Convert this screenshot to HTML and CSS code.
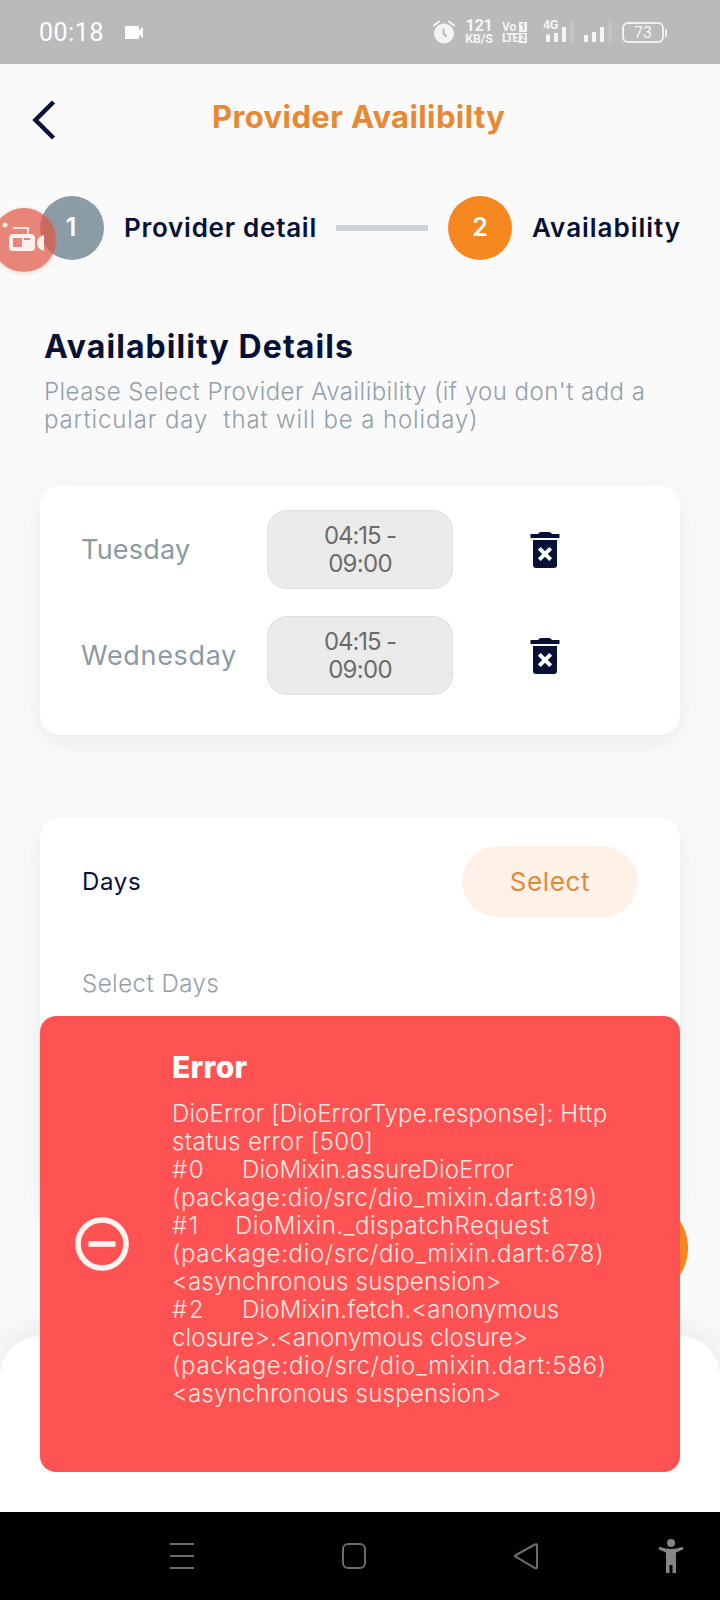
FILE: index.html
```
<!DOCTYPE html>
<html lang="en">
<head>
<meta charset="utf-8">
<title>Provider Availability</title>
<link rel="stylesheet" href="styles.css">
</head>
<body>
<div class="screen">
  <header class="status">
    <div class="status-left">
      <span class="clock">00:18</span>
      <svg class="cam" width="19" height="13" viewBox="0 0 19 13"><path d="M1 0h12q1 0 1 1v3.500L18 1v11l-4-3.500V12q0 1-1 1H1q-1 0-1-1V1q0-1 1-1z" fill="#fff"/></svg>
    </div>
    <div class="status-right">
      <svg class="alarm" width="22" height="24" viewBox="0 0 22 24"><circle cx="11" cy="13.500" r="10" fill="#f4f4f4"/><path d="M1 5.500L6 1.500M21 5.500L16 1.500" stroke="#f4f4f4" stroke-width="2" stroke-linecap="round"/><path d="M10.500 9.500v4l2.500 2.500" stroke="#bababa" stroke-width="2" fill="none" stroke-linecap="round"/></svg>
      <div class="speed"><span class="sp1">121</span><span class="sp2">KB/S</span></div>
      <div class="volte"><div><span>Vo</span><b>1</b></div><div><span class="lte">LTE</span><b>2</b></div></div>
      <div class="sig"><span class="g4">4G</span><svg width="30" height="20" viewBox="0 0 30 20"><path d="M1 14a2 2 0 0 1 4 0v6H1zM9 11h4v9H9zM17 5h4v15h-4z" fill="#f4f4f4"/><path d="M25 0h4v20h-4z" fill="#c3c3c3"/></svg></div>
      <svg class="sig2" width="30" height="20" viewBox="0 0 30 20"><path d="M1 13h4v7H1zM9 10h4v10H9zM17 5h4v15h-4z" fill="#f4f4f4"/><path d="M25 0h4v20h-4z" fill="#c3c3c3"/></svg>
      <div class="batt">73</div>
    </div>
  </header>

  <div class="appbar">
    <svg class="back" width="24" height="40" viewBox="0 0 24 40"><path d="M21.500 2L3.500 20l18 18" fill="none" stroke="#071135" stroke-width="4.500"/></svg>
    <h1 class="title">Provider Availibilty</h1>
  </div>

  <div class="stepper">
    <div class="dot dot-done">1</div>
    <div class="step-label step-one">Provider detail</div>
    <div class="line"></div>
    <div class="dot dot-now">2</div>
    <div class="step-label step-two">Availability</div>
  </div>

  <section class="intro">
    <h2 class="h2">Availability Details</h2>
    <p class="light"><span class="p1">Please Select Provider Availibility (if you don't add a</span><br><span class="p2">particular day&nbsp; that will be a holiday)</span></p>
  </section>

  <section class="card days-card">
    <div class="row">
      <div class="day tue">Tuesday</div>
      <div class="time"><span class="from">04:15 -</span><span class="to">09:00</span></div>
      <svg class="trash" width="30" height="37" viewBox="0 0 30 37"><path d="M.500 2H8q1-2 3-2h8q2 0 3 2h7.500v4H.500zM3 8h24v25q0 3-3 3H6q-3 0-3-3z" fill="#071135"/><path d="M9.300 16.300l11.400 11.400M20.700 16.300L9.300 27.700" stroke="#fff" stroke-width="4"/></svg>
    </div>
    <div class="row">
      <div class="day wed">Wednesday</div>
      <div class="time"><span class="from">04:15 -</span><span class="to">09:00</span></div>
      <svg class="trash" width="30" height="37" viewBox="0 0 30 37"><path d="M.500 2H8q1-2 3-2h8q2 0 3 2h7.500v4H.500zM3 8h24v25q0 3-3 3H6q-3 0-3-3z" fill="#071135"/><path d="M9.300 16.300l11.400 11.400M20.700 16.300L9.300 27.700" stroke="#fff" stroke-width="4"/></svg>
    </div>
  </section>

  <section class="card pick-card">
    <div class="pick-row">
      <div class="pick-label">Days</div>
      <div class="select">Select</div>
    </div>
    <div class="pick-hint">Select Days</div>
  </section>

  <div class="fab"></div>
  <div class="sheet"></div>

  <div class="error">
    <svg class="minus" width="54" height="54" viewBox="0 0 54 54"><circle cx="27" cy="27" r="24" fill="none" stroke="#fff3f0" stroke-width="5.600"/><path d="M13.500 27h27" stroke="#fff3f0" stroke-width="5.600"/></svg>
    <div class="error-body">
      <div class="error-title">Error</div>
      <div class="trace">
        <div class="t1">DioError [DioErrorType.response]: Http</div>
        <div class="t2">status error [500]</div>
        <div class="t3"><span class="num">#0</span>DioMixin.assureDioError</div>
        <div class="t4">(package:dio/src/dio_mixin.dart:819)</div>
        <div class="t5"><span class="num num1">#1</span>DioMixin._dispatchRequest</div>
        <div class="t6">(package:dio/src/dio_mixin.dart:678)</div>
        <div class="t7">&lt;asynchronous suspension&gt;</div>
        <div class="t8"><span class="num">#2</span>DioMixin.fetch.&lt;anonymous</div>
        <div class="t9">closure&gt;.&lt;anonymous closure&gt;</div>
        <div class="t10">(package:dio/src/dio_mixin.dart:586)</div>
        <div class="t7">&lt;asynchronous suspension&gt;</div>
      </div>
    </div>
  </div>

  <nav class="nav">
    <svg width="720" height="88" viewBox="0 0 720 88" fill="none" stroke="#6c6c6c" stroke-width="2"><path d="M170 32h24M170 44h24M170 56h24"/><rect x="343" y="32" width="22" height="24" rx="5"/><path d="M535 32.500l-19 10.500q-2 1 0 2l19 11q2 1 2-1V33.500q0-2-2-1z"/><g fill="#858585" stroke="none"><circle cx="671" cy="31" r="4"/><path d="M660 35q11 4 22 0q2 0 1 2.500l-7 3V61h-3.500v-8h-3v8H666V40.500l-7-3Q658 35 660 35z"/></g></svg>
  </nav>

  <div class="rec"><svg width="64" height="64" viewBox="0 0 64 64"><circle cx="13" cy="17" r="2.500" fill="#fbe3df"/><path d="M21 20h15v6" fill="none" stroke="#fbe3df" stroke-width="2"/><path fill-rule="evenodd" d="M21 26h18q4 0 4 4v9q0 4-4 4H21q-4 0-4-4v-9q0-4 4-4zM21 30v9h9v-9zM32 30v2h6v-2z" fill="#fff0ee"/><path d="M52 27v16q-7-2-7-8t7-8z" fill="#fff0ee"/></svg></div>
</div>
</body>
</html>
```
FILE: styles.css
```
* { box-sizing: border-box; margin: 0; }
body { margin: 0; font-family: Inter, "Liberation Sans", sans-serif; }
.screen { position: relative; width: 720px; height: 1600px; overflow: hidden; background: #fafafa; color: #071135; }
span { white-space: pre; }
.status { height: 64px; background: #bababa; color: #fff; display: flex; justify-content: space-between; padding: 0 56px 0 39px; font-family: Roboto, sans-serif; }
.status-left { display: flex; align-items: center; gap: 21px; }
.clock { font-size: 25px; line-height: 66px; letter-spacing: .55px; padding-top: 2px; }
.status-right { display: flex; align-items: center; color: #f4f4f4; }
.alarm { margin-right: 10px; }
.speed { width: 28px; margin-right: 9px; display: flex; flex-direction: column; align-items: center; font-weight: 700; }
.sp1 { font-size: 16.500px; line-height: 13px; letter-spacing: -.5px; }
.sp2 { font-size: 12.500px; line-height: 13px; letter-spacing: -.2px; }
.volte { width: 26px; margin-right: 17px; display: flex; flex-direction: column; gap: 1px; font: 700 12px/10px Roboto, sans-serif; }
.volte div { display: flex; justify-content: space-between; width: 25px; }
.volte b { background: #f4f4f4; color: #bababa; font-size: 9px; width: 8px; text-align: center; }
.lte { letter-spacing: -1.200px; }
.sig { position: relative; width: 30px; height: 20px; margin-right: 8px; }
.g4 { position: absolute; left: -2px; top: -3px; font-size: 12.500px; line-height: 12px; font-weight: 700; letter-spacing: -.5px; }
.sig2 { margin-right: 9px; }
.batt { width: 42px; height: 21px; border: 2px solid #f0f0f0; border-radius: 6px; font: 16px/17px Roboto, sans-serif; text-align: center; position: relative; }
.batt::after { content: ""; position: absolute; right: -5px; top: 5px; width: 2px; height: 8px; border-radius: 1px; background: #f0f0f0; }
.appbar { height: 132px; padding: 35px 0 0 32px; display: flex; }
.title { font-size: 31px; line-height: 36px; font-weight: 700; color: #e78832; margin-left: 156px; letter-spacing: .4px; }
.back { margin-top: 1px; }
.stepper { height: 64px; padding-left: 40px; display: flex; align-items: center; }
.dot { width: 64px; height: 64px; border-radius: 50%; color: #fff; font-size: 25px; font-weight: 600; text-align: center; line-height: 62px; }
.dot-done { background: #8b9ca7; padding-right: 2px; }
.dot-now { background: #f4871f; margin-left: 20px; }
.step-label { font-size: 26px; font-weight: 600; margin-left: 20px; line-height: 60px; height: 61px; white-space: nowrap; }
.step-one { width: 193px; letter-spacing: .74px; }
.step-two { letter-spacing: .97px; }
.line { width: 92px; height: 6px; background: #cdd4d8; margin-left: 19px; }
.intro { padding: 66px 43px 0 44px; height: 225px; }
.h2 { font-size: 32px; line-height: 42px; font-weight: 700; letter-spacing: 1.080px; }
.light { font-size: 24px; line-height: 28px; font-weight: 300; color: #92a0a9; margin-top: 10px; }
.p1 { letter-spacing: .46px; }
.p2 { letter-spacing: .87px; }
.card { margin: 0 40px; background: #fff; border-radius: 20px; box-shadow: 0 8px 24px rgba(110,135,150,.12); }
.days-card { height: 250px; padding: 25px 40px 0 41px; display: flex; flex-direction: column; gap: 27px; }
.row { display: flex; align-items: center; height: 79px; }
.day { width: 186px; font-size: 27px; color: #8b9aa3; line-height: 40px; }
.tue { letter-spacing: .2px; }
.wed { letter-spacing: .67px; }
.time { width: 186px; height: 79px; border: 1px solid #dfdfdf; border-radius: 20px; background: #ebebeb; color: #6b6b6b; font-size: 24px; line-height: 28px; display: flex; flex-direction: column; align-items: center; padding-top: 11px; }
.from { letter-spacing: -1.100px; }
.to { letter-spacing: -.7px; }
.trash { margin: 1px 0 0 77px; }
.pick-card { margin-top: 82px; height: 400px; padding: 29px 42px; }
.pick-row { display: flex; justify-content: space-between; align-items: center; }
.pick-label { font-size: 24px; letter-spacing: .7px; }
.select { width: 176px; height: 71px; border-radius: 36px; background: #fdf1e8; color: #df8b3c; font-size: 26px; text-align: center; line-height: 71px; letter-spacing: .65px; }
.pick-hint { font-size: 24px; font-weight: 300; color: #92a0a9; margin-top: 52px; line-height: 30px; letter-spacing: .5px; }
.fab { position: absolute; left: 588px; top: 1198px; width: 100px; height: 100px; border-radius: 50%; background: #f4871f; }
.sheet { position: absolute; left: 0; top: 1336px; width: 720px; height: 176px; background: #fff; border-radius: 40px 40px 0 0; box-shadow: 0 -6px 30px rgba(110,120,130,.14); }
.error { position: absolute; left: 40px; top: 1016px; width: 640px; height: 456px; border-radius: 16px; background: #ff5252; color: #ffe6e2; display: flex; padding: 29px 35px 0; }
.minus { margin-top: 172px; }
.error-body { margin-left: 43px; }
.error-title { font-size: 30px; font-weight: 800; line-height: 44px; color: #fff; letter-spacing: .3px; }
.trace { margin-top: 11px; font-size: 24px; line-height: 28px; font-weight: 300; }
.trace div { white-space: nowrap; height: 28px; }
.num { display: inline-block; width: 70px; letter-spacing: 1.500px; }
.num1 { width: 63px; }
.t1 { letter-spacing: .13px; }
.t2 { letter-spacing: .38px; }
.t3 { letter-spacing: .12px; }
.t4 { letter-spacing: .58px; }
.t5 { letter-spacing: .58px; }
.t6 { letter-spacing: .66px; }
.t7 { letter-spacing: .23px; }
.t8 { letter-spacing: .2px; }
.t9 { letter-spacing: .06px; }
.t10 { letter-spacing: .7px; }
.nav { position: absolute; left: 0; top: 1512px; height: 88px; background: #000; }
.rec { position: absolute; left: -8px; top: 208px; width: 64px; height: 64px; border-radius: 50%; background: rgba(224,88,70,.72); box-shadow: 0 1px 4px rgba(224,88,70,.3); }
```
